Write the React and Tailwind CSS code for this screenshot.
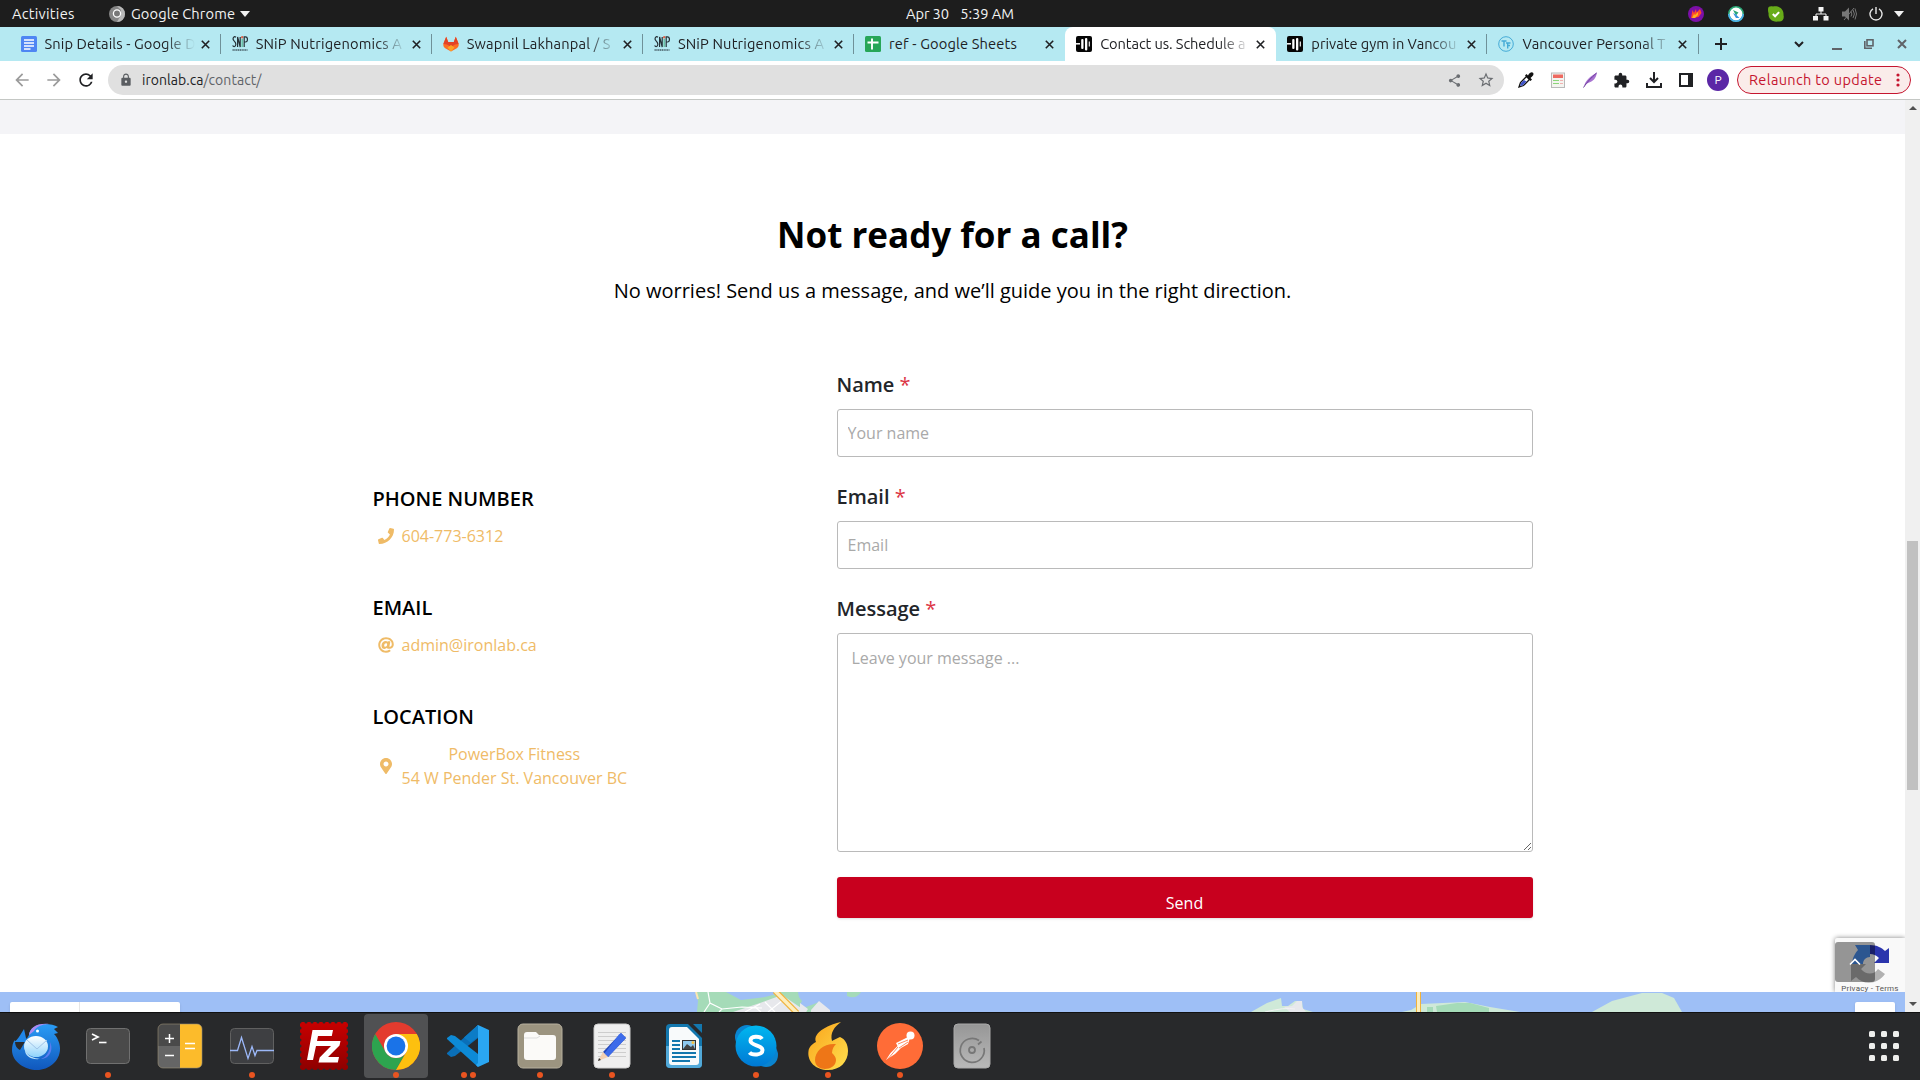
import React from 'react';
import { FaPhone, FaAt, FaMapMarkerAlt } from 'react-icons/fa';
import { MdArrowBack, MdArrowForward, MdRefresh, MdLock, MdShare, MdStarBorder, MdExtension } from 'react-icons/md';

const UI = "font-['Ubuntu','Noto_Sans',sans-serif]";

/* ---------- favicons ---------- */
const DocsIcon = () => (
  <svg width="16" height="16" viewBox="0 0 16 16"><rect width="16" height="16" rx="1.5" fill="#4f86f3" /><path d="M3 4h10M3 7h10M3 10h10M3 13h6.500" stroke="#fff" strokeWidth="1.500" /></svg>
);
const SnipIcon = () => (
  <svg width="16" height="16" viewBox="0 0 16 16" fill="none" stroke="#263238" strokeWidth="1.200">
    <path d="M4 1.200C2-.2.6 2 1.300 3.800S4 6 3.800 8.500 1.500 11 .6 9.500" />
    <path d="M5.600 11V1l2.600 10V1" />
    <path d="M10.200 3v8" stroke="#57b894" /><circle cx="10.200" cy="1.200" r=".6" stroke="#e0654c" />
    <path d="M12.200 11V.8h1.300c2.600 0 2.600 5.200 0 5.200h-1.300" />
    <path d="M.5 14h15" stroke="#607d86" strokeWidth="2" strokeDasharray="1.300 .5" />
  </svg>
);
const GitlabIcon = () => (
  <svg width="16" height="16" viewBox="0 0 16 16"><path d="M3.200.8 5.200 6h5.600l2-5.200L15.400 7c.8 2.500 0 4-1.600 5.300L8 15.600l-5.800-3.300C.6 11-.2 9.500.6 7z" fill="#fc6d26" /><path d="M3.200.8 5.200 6h5.600l2-5.200L15.600 8 12 8.500 8 11 4 8.500.4 8z" fill="#e24329" /><path d="m4.500 11.500 3.500-2.500 3.500 2.500L8 15.600z" fill="#fca326" /></svg>
);
const SheetsIcon = () => (
  <svg width="16" height="16" viewBox="0 0 16 16"><rect width="16" height="16" rx="1.500" fill="#27a658" /><path d="M2.500 6.500h11M7 2.500v11" stroke="#fff" strokeWidth="1.900" /></svg>
);
const IronIcon = () => (
  <svg width="16" height="16" viewBox="0 0 16 16"><rect width="16" height="16" rx="2" fill="#050505" /><path d="M0 7.800h4" stroke="#fff" strokeWidth="1.500" /><rect x="5.200" y="3" width="2.300" height="10" rx="1" fill="#fff" /><rect x="9" y="2" width="2.300" height="12.500" rx="1" fill="#fff" /><path d="M13.300 5.500v5" stroke="#fff" strokeWidth="1.100" /></svg>
);
const TtIcon = () => (
  <svg width="16" height="16" viewBox="0 0 16 16" fill="none" stroke="#45abd6"><circle cx="8" cy="8" r="7.300" strokeWidth="1" /><path d="M3.500 5h5M6 5v5.500M8 7h4.500M9.700 7v5.500M9.700 9.500H12" strokeWidth="1.400" /></svg>
);

const tabs = [
  { t: 'Snip Details - Google D', icon: DocsIcon, track: 'tracking-[0.1px]' },
  { t: 'SNiP Nutrigenomics A', icon: SnipIcon, track: 'tracking-[0.15px]' },
  { t: 'Swapnil Lakhanpal / S', icon: GitlabIcon, track: 'tracking-[0.15px]' },
  { t: 'SNiP Nutrigenomics A', icon: SnipIcon, track: 'tracking-[0.15px]' },
  { t: 'ref - Google Sheets', icon: SheetsIcon, track: 'tracking-[0.15px]', short: true },
  { t: 'Contact us. Schedule a', icon: IronIcon, active: true, track: 'tracking-[-0.1px]' },
  { t: 'private gym in Vancou', icon: IronIcon, track: 'tracking-[0px]' },
  { t: 'Vancouver Personal T', icon: TtIcon, track: 'tracking-[0.1px]' },
];

function Tab({ t, icon: Icon, active, track, short }) {
  return (
    <div className={`flex h-full w-[211.15px] shrink-0 items-center pl-[11px] ${active ? 'rounded-t-lg bg-white' : ''}`}>
      <Icon />
      <div className={`ml-2 h-5 w-[150px] overflow-hidden whitespace-nowrap text-[14.67px] leading-5 text-[#202124] ${short ? '' : '[mask-image:linear-gradient(to_right,black_80%,transparent)]'} ${track}`}>{t}</div>
      <svg className="ml-[6px]" width="9" height="9" viewBox="0 0 9 9"><path d="m.8.8 7.400 7.400M8.200.8.8 8.200" stroke="#202124" strokeWidth="1.600" /></svg>
      {!active && <span className={`ml-auto h-5 w-px ${short ? '' : 'bg-[#6f9199]'}`} />}
    </div>
  );
}

function TopBar() {
  return (
    <div className="flex h-[27px] items-center bg-[#1d1d1d] pl-3 text-[14.67px] text-[#f2f2f2]">
      <span className="w-[97px] tracking-[0.250px]">Activities</span>
      <svg width="16" height="16" viewBox="0 0 16 16"><circle cx="8" cy="8" r="8" fill="#858585" /><path d="M8 0a8 8 0 0 1 8 8 8 8 0 0 1-8 8l4-7V4z" fill="#b9b9b9" /><circle cx="8" cy="7.500" r="3.600" fill="#777" stroke="#fff" strokeWidth="1.300" /></svg>
      <span className="ml-[6px] w-[105px] whitespace-nowrap tracking-[0.100px]">Google Chrome</span>
      <svg className="ml-1" width="10" height="6" viewBox="0 0 10 6"><path d="M0 0h10L5 6z" fill="#f2f2f2" /></svg>
      <span className="ml-auto flex w-[108px] justify-between whitespace-nowrap"><span className="tracking-[-0.1px]">Apr 30</span><span className="tracking-[-0.050px]">5:39 AM</span></span>
      <div className="ml-[674px] flex w-[232px] shrink-0 items-center">
        <svg className="mr-6" width="16" height="16" viewBox="0 0 16 16"><circle cx="8" cy="8" r="8" fill="#7c0fa8" /><path d="M3 12 4.500 4l1.500 3L8 3l.5 3.500L12 3l1.500 4-3 4z" fill="#ff4a2b" /><path d="M4 12 6 8l1 1 3-3v3l-3 3z" fill="#ffb21a" /></svg>
        <svg className="mr-6" width="16" height="16" viewBox="0 0 16 16"><circle cx="8" cy="8" r="7.200" fill="#fff" stroke="#2aa876" strokeWidth="1.600" /><path d="M15.200 8A7.200 7.200 0 0 1 8 15.200 7.200 7.200 0 0 1 .8 8" fill="none" stroke="#4daff0" strokeWidth="1.600" /><path d="m5 4 5.500 2.500-2.500 3z" fill="#2aa876" /><path d="m5 7 3 1.500 3.500 3.500H8L6.500 9.500z" fill="#3795dd" /></svg>
        <svg className="mr-[29px]" width="16" height="16" viewBox="0 0 16 16"><path d="M0 3c0-3 3-3 5-2.500C11-.5 16 3 15.500 9c1 4-1 7-5 6.500C4 16.500 0 12.500.6 7.500 0 6 0 4.500 0 3z" fill="#68ac19" /><path d="m4.800 8 2.300 2.300 4-4.200" stroke="#fff" strokeWidth="2" fill="none" /></svg>
        <svg width="16" height="14" viewBox="0 0 16 14" fill="#f5f5f5"><rect x="5.500" y="0" width="5" height="4.500" /><path d="M8 4v3M3 10V7h10v3" stroke="#f5f5f5" fill="none" /><rect x="0" y="9" width="5" height="4.500" /><rect x="10.500" y="9" width="5" height="4.500" /></svg>
        <svg className="ml-[13px]" width="15" height="14" viewBox="0 0 15 14" fill="none" stroke="#777"><path d="M0 4.500h3l4-4v13l-4-4H0z" fill="#777" stroke="none" /><path d="M9 4.500q1.700 2.500 0 5M11 3q2.800 4 0 8M13 1.500q3 5.500 0 11M2 13 12 1" /></svg>
        <svg className="ml-[12px]" width="14" height="14" viewBox="0 0 14 14" fill="none" stroke="#e8e8e8" strokeWidth="1.400"><path d="M7 0v7M4 1.800a6 6 0 1 0 6 0" /></svg>
        <svg className="ml-[11px]" width="10" height="6" viewBox="0 0 10 6"><path d="M0 0h10L5 6z" fill="#f2f2f2" /></svg>
      </div>
    </div>
  );
}

function TabStrip() {
  return (
    <div className="flex h-[34px] bg-[#b5e9f2] pl-[9.5px]">
      {tabs.map((tab, i) => <Tab key={i} {...tab} />)}
      <div className="flex flex-1 items-center pl-4 text-[#202124]">
        <svg width="12" height="12" viewBox="0 0 12 12"><path d="M6 0v12M0 6h12" stroke="currentColor" strokeWidth="2" /></svg>
        <svg className="ml-[67px]" width="10" height="7" viewBox="0 0 10 7" fill="none"><path d="m1 1 4 4 4-4" stroke="currentColor" strokeWidth="2" /></svg>
        <span className="ml-[28px] mt-[9px] h-[2px] w-[10px] bg-[#5f6368]" />
        <svg className="ml-[22px]" width="10" height="10" viewBox="0 0 10 10" fill="none" stroke="#5f6368" strokeWidth="1.600"><rect x="3" y=".8" width="6" height="6" /><path d="M.8 2v7.200H8" /></svg>
        <svg className="ml-[23px]" width="10" height="10" viewBox="0 0 10 10"><path d="m1 1 8 8M9 1 1 9" stroke="#5f6368" strokeWidth="2" /></svg>
      </div>
    </div>
  );
}

function Toolbar() {
  return (
    <div className="flex h-[39px] items-center border-b border-[#c4c7c4] bg-white pl-3">
      <MdArrowBack size={20} className="text-[#9b9b9b]" />
      <MdArrowForward size={20} className="ml-3 text-[#9b9b9b]" />
      <MdRefresh size={20} className="ml-3 text-[#202124]" />
      <div className="ml-3 flex h-[30px] w-[1396px] items-center rounded-full bg-[#e0e0e0] pl-[11px] text-[14px]">
        <MdLock size={14} className="text-[#5a5d61]" />
        <span className="ml-[9px] tracking-[0.050px] text-[#202124]">ironlab.ca<span className="text-[#5f6368]">/contact/</span></span>
        <MdShare size={15} className="ml-auto text-[#6a6d71]" />
        <MdStarBorder size={18} className="ml-[15px] mr-[9px] text-[#6a6d71]" />
      </div>
      <div className="ml-[14px] flex items-center gap-4">
        <svg width="16" height="16" viewBox="0 0 16 16"><path d="m1 15 1.500-4.500 6-6L11.500 7.500l-6 6z" fill="#fff" stroke="#111" strokeWidth="1.300" /><path d="m2 14 1-3 3-3 2.500 1.500-4 4z" fill="#3e52c9" /><path d="M7 3.500 12.500 9l1.500-1.500-1.500-1.500C15.500 4 16 2 15 .8S11.500.5 10 3.500L8.500 2z" fill="#111" /></svg>
        <svg width="16" height="16" viewBox="0 0 16 16"><rect x="1.500" y="1" width="13" height="14.500" fill="#f4f4f0" stroke="#b9b9b9" /><rect x="3" y="2.500" width="10" height="3.500" fill="#ee6a61" /><path d="M3 8.500h6M3 11.500h6" stroke="#8cd67a" strokeWidth="1.200" /><path d="M10 8.500h3M10 11.500h3" stroke="#f0a0a0" strokeWidth=".8" /></svg>
        <svg width="16" height="16" viewBox="0 0 16 16"><path d="M2 14C3.500 9 8 4 15 .5c-1 6-4 9-9 10.500L3 13z" fill="#a873d1" /><path d="M1.500 15.500C5 10 9 6 14.500 1" stroke="#6d3b9b" fill="none" /></svg>
        <MdExtension size={17} className="-ml-px text-[#202124]" />
        <svg width="16" height="16" viewBox="0 0 16 16" fill="none" stroke="#202124" strokeWidth="2"><path d="M8 0v10M4 6l4 4 4-4M1 11v4h14v-4" /></svg>
        <svg width="16" height="16" viewBox="0 0 16 16"><rect x="2" y="2" width="12" height="12" fill="none" stroke="#202124" strokeWidth="2" /><rect x="10" y="1" width="5" height="14" fill="#202124" /></svg>
      </div>
      <div className="ml-[13px] flex h-[22px] w-[22px] items-center justify-center rounded-full bg-[#5b27a6] text-[12px] text-white">P</div>
      <div className="ml-2 flex h-7 w-[174px] items-center rounded-full border border-[#c5152f] bg-[#faecea] pl-[11px] text-[14.500px] text-[#c5152f]">
        <span className="w-[137px] whitespace-nowrap tracking-[0.350px]">Relaunch to update</span>
        <svg className="ml-[10px]" width="4" height="14" viewBox="0 0 4 14" fill="#c5152f"><circle cx="2" cy="2" r="1.600" /><circle cx="2" cy="7" r="1.600" /><circle cx="2" cy="12" r="1.600" /></svg>
      </div>
    </div>
  );
}

/* ---------- page ---------- */
function ContactItem({ title, icon, children }) {
  return (
    <div className="h-[109px]">
      <h3 className="text-[20px] font-semibold leading-6 text-black">{title}</h3>
      <div className="mt-[13px] flex items-center pl-[5px] text-base leading-6 text-[#efbb67]">
        {icon}
        <span className="ml-2 text-center">{children}</span>
      </div>
    </div>
  );
}

function Label({ children }) {
  return <div className="pt-px text-[20px] font-semibold leading-6 text-[#222529]">{children} <span className="font-normal text-[#dc3545]">*</span></div>;
}

function MapStrip() {
  return (
    <div className="relative h-5 bg-[#9ebff6]">
      <svg className="block" width="1905" height="20" viewBox="0 0 1905 20">
        <path d="M696 0l2 9-1 11h132l-10-10-18 7-3-17h-14l-19 5-24 3-15-8z" fill="#a5dbb8" />
        <path d="M777 0h18l7 9-4 7z" fill="#a5dbb8" />
        <path d="M733 20l27-9 22-8 25 17zM800 11l8 6-2 3h-6zM811 18l8-9 11 9v2h-19z" fill="#e7e8ec" />
        <path d="M708 0l2 11 12 6 20-2 20 1M710 11l-6 9M722 17l-3 3M760 12l-15 8M765 10l10 10M755 15l6 5M783 8l-15 12" stroke="#fff" strokeWidth="1.200" fill="none" />
        <path d="M696 0l2 7" stroke="#fbe7b0" strokeWidth="2" />
        <path d="M775-1l22 22" stroke="#f0b23c" strokeWidth="6" /><path d="M775-1l22 22" stroke="#fdeebd" strokeWidth="3.500" />
        <path d="M847 0h14q-5 8-14 4z" fill="#a5dbb8" />
        <path d="M1251 20l16-9 14-5 1 8 6 0 7-5 7 0 1 8 10 3z" fill="#cfe9d8" />
        <path d="M1284 15l8-1 5-5h5v6l4 5h-16z" fill="#e7e8ec" /><path d="M1265 20q20-5 30-3" stroke="#f2f2f2" fill="none" />
        <path d="M1402 20l9-2 10-6 44-2 25 5 30 5z" fill="#cfe9d8" /><path d="M1437 20l-1-6 21-3h13l19 5v4z" fill="#a5dbb8" /><rect x="1427" y="15" width="6" height="5" fill="#a5dbb8" />
        <rect x="1416" width="5" height="20" fill="#f0b23c" /><rect x="1417" width="3" height="20" fill="#fdeebd" />
        <path d="M1592 20l20-11 30-8h20l12 5 8 14z" fill="#cfe9d8" />
      </svg>
      <div className="absolute left-[10px] top-[10px] flex h-[10px] w-[170px] rounded-t-[2px] bg-white shadow-sm"><span className="w-[70px] border-r border-[#e6e6e6]" /></div>
      <div className="absolute right-[10px] top-[10px] h-[10px] w-10 rounded-t-[2px] bg-white shadow-sm" />
    </div>
  );
}

function Recaptcha() {
  return (
    <div className="absolute bottom-5 right-0 h-[54px] w-[70px] overflow-hidden rounded-tl-[2px] bg-[#f9f9f9] shadow-[0_0_5px_gray] [clip-path:inset(-6px_0_0_-6px)]">
      <svg className="ml-4 mt-[6px] block" width="40" height="40" viewBox="0 0 40 40">
        <path d="M19 1v12c-4 0-7 3-7 7H1C1 15 4 9 7 6L4 1z" fill="#4a90f0" />
        <path d="M19 1c7 0 12 3 15 6l4-3v15H23l5-5q-4-4-9-4z" fill="#2b35ad" />
        <path d="M0 20h15l-5 5c5 6 13 6 17 0l7 5c-7 10-21 12-29 3l-5 4z" fill="#b1b1b1" />
      </svg>
      <div className="whitespace-nowrap text-center font-['Roboto',sans-serif] text-[8px] leading-[10px] tracking-[0.200px] text-[#555]">Privacy - Terms</div>
      <div className="absolute left-0 top-1 flex h-10 w-10 items-center justify-center rounded-[3px] bg-black/40">
        <svg width="12" height="8" viewBox="0 0 12 8" fill="none"><path d="m1 6.500 5-5 5 5" stroke="#fff" strokeWidth="1.600" /></svg>
      </div>
    </div>
  );
}

function Page() {
  return (
    <div className="flex h-[912px] bg-white">
      <main className="relative flex w-[1905px] flex-col font-['Open_Sans',sans-serif]">
        <div className="h-[34px] bg-[#f4f4f7]" />
        <h2 className="mt-[76px] text-center text-[35px] font-bold leading-[50px] text-black">Not ready for a call?</h2>
        <p className="mt-[16px] text-center text-[20px] leading-[30px] text-black">No worries! Send us a message, and we’ll guide you in the right direction.</p>
        <div className="mt-[66px] flex flex-1 pl-[372.5px]">
          <div className="w-[464px] shrink-0 pt-[115px]">
            <ContactItem title="PHONE NUMBER" icon={<FaPhone size={16} />}>604-773-6312</ContactItem>
            <ContactItem title="EMAIL" icon={<FaAt size={16} />}>admin@ironlab.ca</ContactItem>
            <ContactItem title="LOCATION" icon={<FaMapMarkerAlt size={16} />}>PowerBox Fitness<br />54 W Pender St. Vancouver BC</ContactItem>
          </div>
          <form className="w-[696px]">
            <Label>Name</Label>
            <input className="mb-[27px] mt-3 block h-12 w-full rounded-[3px] border border-[#bababa] px-[10px] text-base placeholder:text-[#a9a9a9]" placeholder="Your name" />
            <Label>Email</Label>
            <input className="mb-[27px] mt-3 block h-12 w-full rounded-[3px] border border-[#bababa] px-[10px] text-base placeholder:text-[#a9a9a9]" placeholder="Email" />
            <Label>Message</Label>
            <textarea className="mt-3 block h-[219px] w-full rounded-[3px] border border-[#bababa] px-[14px] py-3 text-base placeholder:text-[#a9a9a9]" placeholder="Leave your message ..." />
            <button type="button" className="mt-[25px] block h-[41px] w-full rounded-[3px] bg-[#c8001e] pt-[11px] text-base leading-6 text-white shadow-sm">Send</button>
          </form>
        </div>
        <MapStrip />
        <Recaptcha />
      </main>
      <div className="flex w-[15px] flex-col items-center bg-[#f0f0f0] py-[6px]">
        <svg width="8" height="4" viewBox="0 0 8 4"><path d="M0 4h8L4 0z" fill="#505050" /></svg>
        <div className="mt-[431px] h-[249px] w-[11px] bg-[#c1c1c1]" />
        <svg className="mt-auto" width="8" height="4" viewBox="0 0 8 4"><path d="M0 0h8L4 4z" fill="#505050" /></svg>
      </div>
    </div>
  );
}

/* ---------- dock ---------- */
const S = ({ children }) => <svg width="48" height="48" viewBox="0 0 48 48">{children}</svg>;

const Thunderbird = () => (
  <S>
    <defs><linearGradient id="tb" x1="0" y1="0" x2="0" y2="1"><stop offset="0" stopColor="#2a9cf5" /><stop offset="1" stopColor="#1057bd" /></linearGradient><linearGradient id="tbe" x1="0" y1="0" x2="0" y2="1"><stop offset="0" stopColor="#fff" /><stop offset="1" stopColor="#8fd3fb" /></linearGradient></defs>
    <path d="M2 20c4-2 6-7 10-13l2 9 4 4z" fill="#2086e8" />
    <path d="M17 13C18 6 24 2 33 2c5 0 10 1 13 3l-4 2 4 4-4 1c4 4 6 10 6 15 0 12-11 21-23 21S0 40 0 28c0-4 1-8 3-10 0 5 1 8 5 10z" fill="url(#tb)" />
    <path d="M17 13C18 6 24 1 37 2c-7 0-13 3-15 7z" fill="#a98af2" />
    <circle cx="25.500" cy="9" r="1.500" fill="#fff" />
    <path d="M38 20c4 8-1 17-9 17 6-2 10-9 9-17z" fill="#5c7df0" />
    <ellipse cx="24" cy="24.500" rx="12" ry="10.500" fill="url(#tbe)" />
    <path d="M15 18l10 9 10-9" stroke="#9fc3e8" fill="none" /><path d="M13 28c3 7 9 8 15 9-9 1-15-3-15-9z" fill="#bde4fb" />
  </S>
);
const Terminal = () => (
  <S><rect x="2.500" y="6.500" width="43" height="35" rx="4" fill="#4a4a4a" stroke="#707070" /><path d="m8 12 6 3-6 3" stroke="#fff" strokeWidth="1.700" fill="none" /><path d="M15 20.500h7.500" stroke="#fff" strokeWidth="1.600" /></S>
);
const Calculator = () => (
  <S><rect x="2" y="2" width="44" height="44" rx="5" fill="#4a4a4a" /><path d="M2 24h22v22H7a5 5 0 0 1-5-5z" fill="#656565" /><path d="M24 2h17a5 5 0 0 1 5 5v34a5 5 0 0 1-5 5H24z" fill="#fcbb2b" /><rect x="2" y="2" width="44" height="44" rx="5" fill="none" stroke="#9b8f76" strokeOpacity=".6" /><path d="M9 16.500h9M13.500 12v9M9 33.500h9M29 21.500h10M29 26.500h10" stroke="#fff" strokeWidth="1.500" /></S>
);
const Monitor = () => (
  <S><rect x="2.500" y="6.500" width="43" height="35" rx="4" fill="#3e3f42" stroke="#606060" /><path d="M2 28.500h7.500l4-13 6.500 21 4-12 3 9 2-5h17" stroke="#9cb8f8" strokeWidth="1.300" fill="none" /></S>
);
const FileZilla = () => (
  <S>
    <defs><linearGradient id="fz" x1="0" y1="0" x2="0" y2="1"><stop offset="0" stopColor="#c80000" /><stop offset="1" stopColor="#8e0000" /></linearGradient></defs>
    <rect width="48" height="48" fill="url(#fz)" />
    <rect x="0" y="0" width="48" height="48" fill="none" stroke="#292a2c" strokeWidth="3" strokeLinecap="round" strokeDasharray="0 6" />
    <path d="M12.500 8H33l-1.200 6H18l-1 5h12l-1 5H16l-3 14H7z" fill="#fff" />
    <path d="M22 19h18.500l-1 4.500L28 35h11l-1.200 5.500H18.500l1.200-5L31 24h-10z" fill="#fff" />
  </S>
);
const Chrome = () => (
  <S>
    <circle cx="24" cy="24" r="24" fill="#e33b2e" />
    <path d="M3.200 12 13.600 30A12 12 0 0 0 34.400 30L24 48A24 24 0 0 1 3.200 12z" fill="#2da44f" />
    <path d="M24 12h20.800A24 24 0 0 1 24 48l10.400-18z" fill="#fdc00f" />
    <circle cx="24" cy="24" r="12" fill="#fff" /><circle cx="24" cy="24" r="9.400" fill="#1a73e8" />
  </S>
);
const VsCode = () => (
  <S><path d="M34 3 3 31v1l4 3 4-1 23-18z" fill="#0a6fb8" /><path d="M3 16l4-3 4 1 23 18v13L3 17z" fill="#0d8ad6" /><path d="M34 3l11 5v32l-11 5-2-2 2-2V7l-2-2z" fill="#2aa6f2" /><path d="M34 3 20 15.500l6.500 5L34 15z" fill="#0c7cc6" /></S>
);
const Files = () => (
  <S><rect x="2" y="2" width="44" height="44" rx="5" fill="#9c9480" stroke="#b7b09e" /><path d="M8 13a3 3 0 0 1 3-3h9l3 3h14a3 3 0 0 1 3 3v19a3 3 0 0 1-3 3H11a3 3 0 0 1-3-3z" fill="#fbfaf8" /><path d="M8 16h13l3-2" stroke="#ddd" fill="none" /></S>
);
const TextEdit = () => (
  <S><rect x="6" y="2" width="36" height="44" rx="4" fill="#efefef" stroke="#d0d0d0" /><path d="M10 10.500h28M10 14.500h28M10 18.500h28M10 22.500h28M10 26.500h28M10 30.500h28M10 34.500h28" stroke="#cdcdcd" /><path d="M15 30 33 11l5 5-18 19z" fill="#2346b8" /><path d="m31 12.500 2-1.500 5 5-18 19-4-3z" fill="#3d6bea" /><path d="m15 30 5 5-10 4z" fill="#f3d0b1" /><path d="m11 36 2 2-3 1z" fill="#333" /></S>
);
const Writer = () => (
  <S><path d="M6 6a4 4 0 0 1 4-4h18l14 14v26a4 4 0 0 1-4 4H10a4 4 0 0 1-4-4z" fill="#1377ae" /><path d="M6 24h36v18a4 4 0 0 1-4 4H10a4 4 0 0 1-4-4z" fill="#52a9d9" /><path d="M33 2h9v9z" fill="#1377ae" /><path d="M9 8a3 3 0 0 1 3-3h15l12 12v23a3 3 0 0 1-3 3H12a3 3 0 0 1-3-3z" fill="#f8fafb" /><path d="M12 19h8M12 23h8M12 27h8M12 31h24M12 35h24M12 39h18" stroke="#1377ae" strokeWidth="1.800" /><rect x="22" y="18" width="14" height="10" fill="#333" /><rect x="23" y="19" width="12" height="8" fill="#8fc9ef" /><path d="m23 27 4-5 4 3 2-2 2 4z" fill="#444" /><circle cx="33" cy="20.500" r="1.500" fill="#f6c444" /></S>
);
const Skype = () => (
  <S>
    <defs><linearGradient id="sk" x1="0" y1="0" x2="0" y2="1"><stop offset="0" stopColor="#00b7f0" /><stop offset="1" stopColor="#0078d4" /></linearGradient></defs>
    <circle cx="15" cy="15" r="12" fill="#0a84d0" /><circle cx="34" cy="33" r="12" fill="#0a84d0" /><circle cx="24" cy="24" r="20.500" fill="url(#sk)" />
    <path d="M30 17c-2-3-11.500-3.500-11.500 1.800 0 5.200 12 3.800 12 9.200 0 5.500-10.500 5.500-13 2.500" stroke="#fff" strokeWidth="4" fill="none" />
  </S>
);
const Flame = () => (
  <S>
    <defs><linearGradient id="fl" x1="0" y1="0" x2="1" y2="1"><stop offset="0" stopColor="#f9a21a" /><stop offset="1" stopColor="#ffe04f" /></linearGradient></defs>
    <path d="M37 0C27 2 8 10 12 20c-4 2-7 5-7.500 9C3 40 12 48 24 48s20-8 20-19c0-7-3-12-8-14-2 1-5 2-8 4-2-8 2-14 9-19z" fill="url(#fl)" />
    <path d="M32 22C20 21 11 29 11 38c0 6 5 9 10 9s11-3 11-9c0-3-2-5-4-7 0-4 2-7 4-9z" fill="#ee7617" />
  </S>
);
const Postman = () => (
  <S><circle cx="24" cy="24" r="23" fill="#ff6c37" /><circle cx="34.500" cy="13.500" r="4" fill="#fff" /><path d="M31 15.500 20 21l1.500 3-7 7L10 38l9-6 6-6 7-4 2-6z" fill="#fff" /><path d="m22 22 10-4M23 26l9-6M11 38l11-13" stroke="#ff6c37" strokeWidth=".8" /></S>
);
const Disk = () => (
  <S><defs><linearGradient id="dk" x1="0" y1="0" x2="0" y2="1"><stop offset="0" stopColor="#969696" /><stop offset="1" stopColor="#b9b9b9" /></linearGradient></defs><rect x="6" y="2" width="36" height="44" rx="4" fill="url(#dk)" stroke="#aaa" /><path d="M33.500 19.500 30 22.500M31 18.500A12 12 0 1 0 36 26" stroke="#777" strokeWidth="1.700" fill="none" /><circle cx="24" cy="28" r="3" stroke="#777" strokeWidth="1.800" fill="none" /></S>
);

const apps = [
  { I: Thunderbird, dots: 0 }, { I: Terminal, dots: 1 }, { I: Calculator, dots: 0 }, { I: Monitor, dots: 1 },
  { I: FileZilla, dots: 0 }, { I: Chrome, dots: 1, active: true }, { I: VsCode, dots: 2 }, { I: Files, dots: 1 },
  { I: TextEdit, dots: 1 }, { I: Writer, dots: 0 }, { I: Skype, dots: 1 }, { I: Flame, dots: 1 },
  { I: Postman, dots: 1 }, { I: Disk, dots: 0 },
];

function Dock() {
  return (
    <div className="flex h-[68px] items-start border-t border-[#111] bg-[#28292b] pt-px">
      {apps.map(({ I, dots, active }, i) => (
        <div key={i} className="flex w-[72px] shrink-0 justify-center">
          <div className={`flex h-16 w-16 flex-col items-center rounded-[4px] pt-2 ${active ? 'bg-[#505153]' : ''}`}>
            <I />
            <div className="mt-[2px] flex gap-[3px]">
              {Array.from({ length: dots }, (_, k) => <span key={k} className="h-[6px] w-[6px] rounded-full bg-[#e95420]" />)}
            </div>
          </div>
        </div>
      ))}
      <div className="ml-auto mr-[21px] mt-[17px] grid grid-cols-3 gap-[6px]">
        {Array.from({ length: 9 }, (_, k) => <span key={k} className="h-[6px] w-[6px] rounded-[1.500px] bg-[#eeeeec]" />)}
      </div>
    </div>
  );
}

export default function App() {
  return (
    <div className={`flex h-[1080px] w-[1920px] flex-col overflow-hidden ${UI}`}>
      <TopBar />
      <TabStrip />
      <Toolbar />
      <Page />
      <Dock />
    </div>
  );
}
